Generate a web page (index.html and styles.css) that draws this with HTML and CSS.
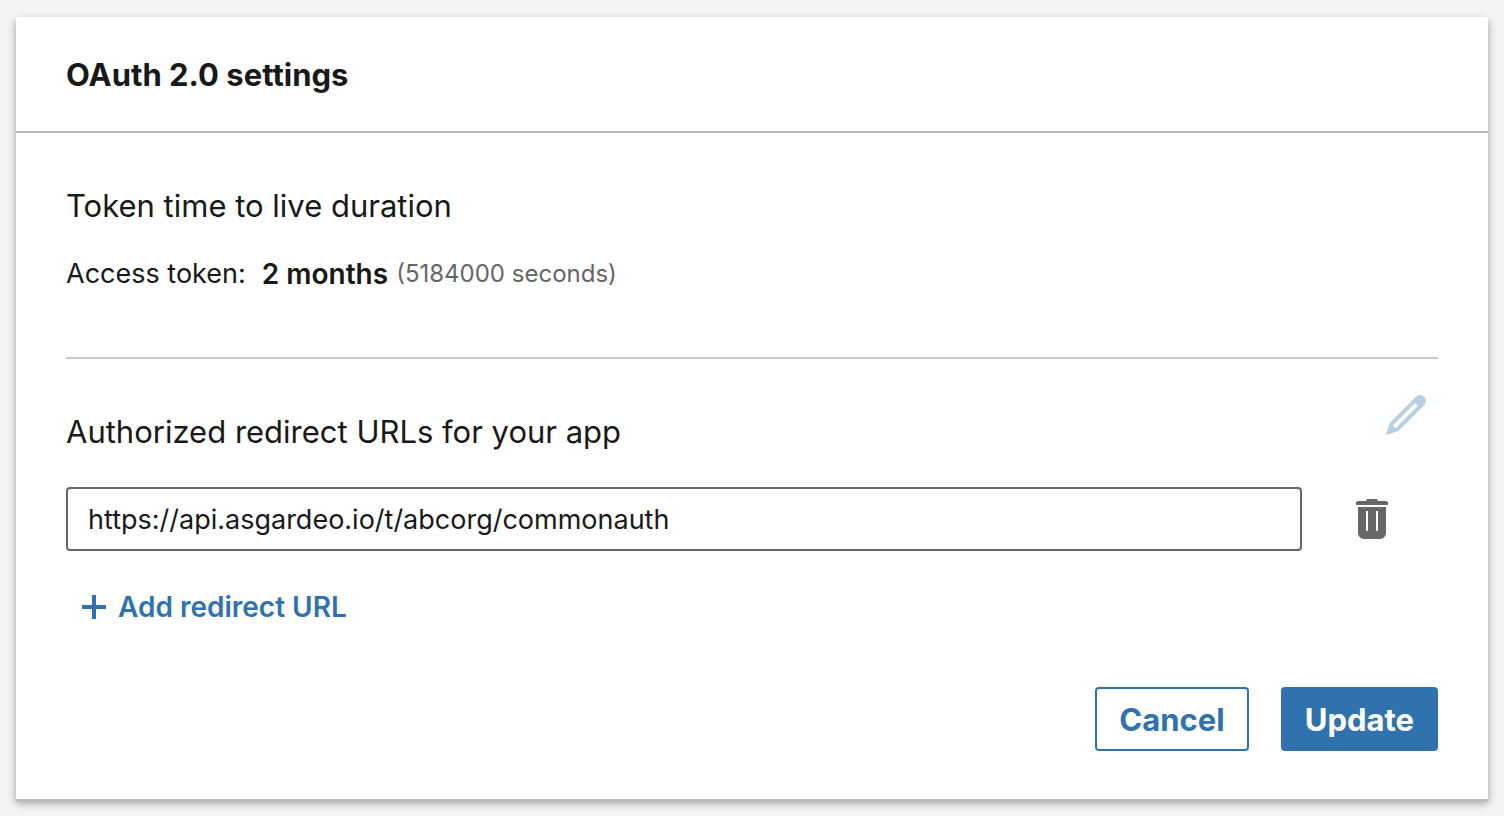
FILE: index.html
```html
<!DOCTYPE html>
<html lang="en">
<head>
<meta charset="utf-8">
<meta name="viewport" content="width=device-width, initial-scale=1">
<title>OAuth 2.0 settings</title>
<link rel="stylesheet" href="styles.css">
</head>
<body>
<main class="card">
  <header class="card-header">
    <h1 class="card-title">OAuth 2.0 settings</h1>
  </header>
  <div class="card-body">
    <section class="token">
      <h2 class="section-title">Token time to live duration</h2>
      <p class="token-row">
        <span class="token-label">Access token:</span>
        <strong class="token-value">2 months</strong>
        <span class="token-note">(5184000 seconds)</span>
      </p>
    </section>
    <form class="redirects">
      <div class="redirects-head">
        <h2 class="section-title" id="redirect-title">Authorized redirect URLs for your app</h2>
        <button class="icon-button edit" type="button" aria-label="Edit redirect URLs" disabled>
          <svg class="icon" viewBox="0 0 24 24" aria-hidden="true"><path d="M21.13 2.86a3 3 0 0 0-4.17 0l-13 13L2 22l6.19-2L21.13 7a3 3 0 0 0 0-4.16zM6.77 18.57l-1.35-1.34L16.64 6 18 7.35z"/></svg>
        </button>
      </div>
      <div class="url-row">
        <input class="url-input" type="text" aria-labelledby="redirect-title" value="https://api.asgardeo.io/t/abcorg/commonauth">
        <button class="icon-button delete" type="button" aria-label="Delete redirect URL">
          <svg class="icon" viewBox="0 0 24 24" aria-hidden="true"><path d="M20 4v1H4V4a1 1 0 0 1 1-1h4a1 1 0 0 1 1-1h4a1 1 0 0 1 1 1h4a1 1 0 0 1 1 1zM5 6h14v13a3 3 0 0 1-3 3H8a3 3 0 0 1-3-3zm4 12h1V8H9zm5 0h1V8h-1z"/></svg>
        </button>
      </div>
      <button class="add-button" type="button">
        <svg class="add-icon" viewBox="0 0 24 24" aria-hidden="true"><path d="M10 0h4v10h10v4H14v10h-4V14H0v-4h10z"/></svg>
        Add redirect URL
      </button>
      <div class="actions">
        <button class="button button-secondary" type="button">Cancel</button>
        <button class="button button-primary" type="submit">Update</button>
      </div>
    </form>
  </div>
</main>
</body>
</html>
```
FILE: styles.css
```css
* {
  box-sizing: border-box;
}

body {
  margin: 0;
  padding: 17px 16px;
  background: #f4f4f4;
  color: #191919;
  font-family: Inter, "Liberation Sans", sans-serif;
}

h1,
h2,
p {
  margin: 0;
}

button,
input {
  font: inherit;
}

.card {
  background: #fff;
  box-shadow: 0 2px 0 #b9b9b9, 0 4px 8px rgba(0, 0, 0, 0.36);
}

.card-header {
  padding: 38px 50px 36px;
  border-bottom: 2px solid #b9b9b9;
}

.card-title {
  font-size: 31px;
  line-height: 40px;
  font-weight: 700;
}

.card-body {
  padding: 53px 50px 48px;
}

.section-title {
  font-size: 31px;
  line-height: 40px;
  font-weight: 400;
}

.token {
  padding-bottom: 63px;
  border-bottom: 2px solid #cacace;
}

.token-row {
  display: flex;
  flex-wrap: wrap;
  align-items: center;
  margin-top: 28px;
  font-size: 27px;
  line-height: 40px;
}

.token-value {
  margin: 0 8px 0 16px;
  font-size: 28px;
  font-weight: 600;
}

.token-note {
  color: #666;
  font-size: 24px;
}

.redirects {
  padding-top: 32px;
}

.redirects-head {
  display: flex;
  justify-content: space-between;
  align-items: flex-start;
  padding-right: 8px;
}

.redirects-head .section-title {
  padding-top: 21px;
}

.icon-button {
  flex: none;
  padding: 0;
  border: 0;
  background: none;
  cursor: pointer;
}

.icon {
  display: block;
  width: 48px;
  height: 48px;
  fill: currentColor;
}

.edit {
  color: #b7cee3;
}

.delete {
  color: #666;
}

.url-row {
  display: flex;
  align-items: center;
  gap: 46px;
  margin-top: 35px;
  padding-right: 42px;
}

.url-input {
  flex: 1;
  min-width: 0;
  height: 64px;
  padding: 0 20px;
  border: 2px solid #666;
  border-radius: 4px;
  background: #fff;
  color: inherit;
  font-size: 27px;
}

.add-button {
  display: flex;
  align-items: center;
  gap: 12px;
  margin-top: 36px;
  padding: 0 16px;
  border: 0;
  background: none;
  color: #3072ae;
  font-size: 28px;
  line-height: 40px;
  font-weight: 600;
  cursor: pointer;
}

.add-icon {
  width: 24px;
  height: 24px;
  fill: currentColor;
}

.actions {
  display: flex;
  justify-content: flex-end;
  gap: 32px;
  margin-top: 60px;
}

.button {
  height: 64px;
  padding: 0 22px;
  border: 2px solid #3072ae;
  border-radius: 4px;
  font-size: 31px;
  font-weight: 700;
  cursor: pointer;
}

.button-secondary {
  background: #fff;
  color: #3072ae;
}

.button-primary {
  background: #3072ae;
  color: #fff;
}
```
